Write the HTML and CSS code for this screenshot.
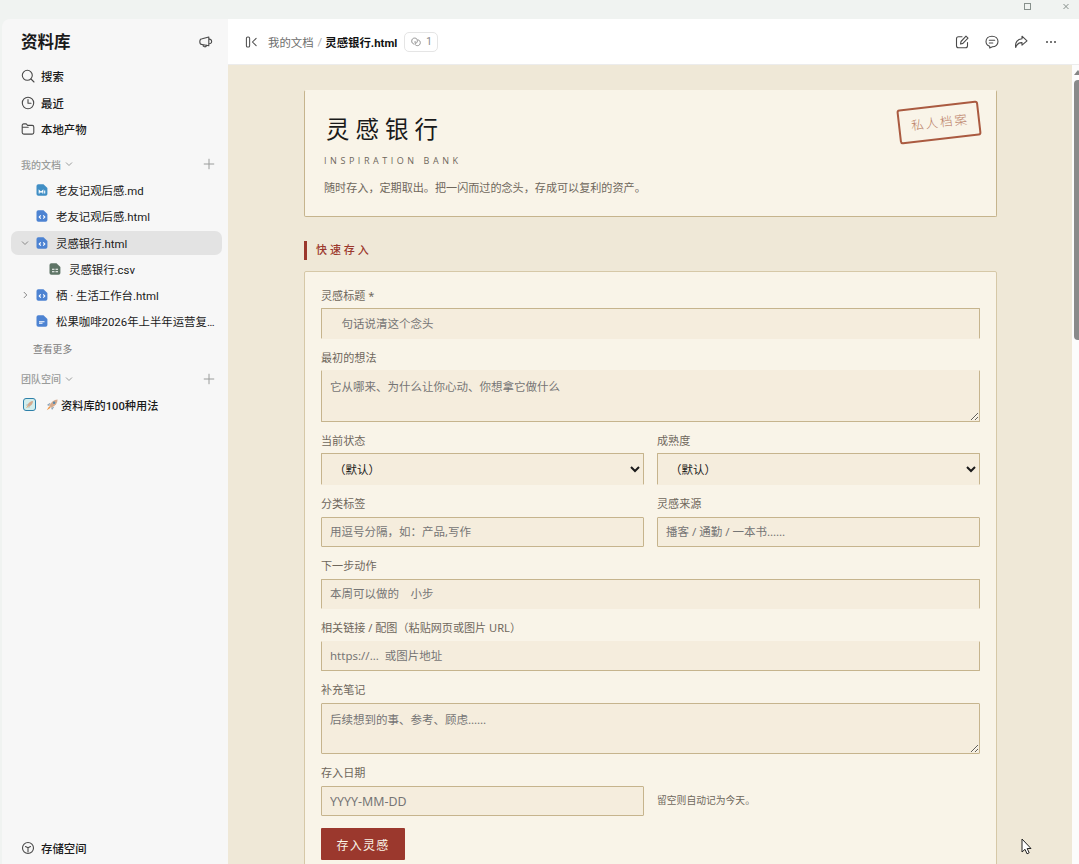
FILE: index.html
```html
<!DOCTYPE html>
<html lang="zh-CN">
<head>
    <meta charset="UTF-8">
    <meta name="viewport" content="width=device-width, initial-scale=1.0">
    <title>资料库</title>
    <link rel="stylesheet" href="styles.css">
</head>
<body>
    <svg class="sprite">
        <symbol id="chevron-down" viewBox="0 0 8 8"><path d="M1 2.5l3 3 3-3"/></symbol>
        <symbol id="plus" viewBox="0 0 12 12"><path d="M6 .8v10.4M.8 6h10.4"/></symbol>
        <symbol id="file" viewBox="0 0 12 12"><path d="M2.3.3h5.2l3.9 3.6v6a1.8 1.8 0 0 1-1.8 1.8H2.3A1.8 1.8 0 0 1 .5 9.900V2.100A1.800 1.800 0 0 1 2.300.3z"/></symbol>
    </svg>
    <div class="titlebar">
        <svg class="win-icon" viewBox="0 0 8 8"><rect x=".5" y=".5" width="6" height="6"/></svg>
        <svg class="win-icon" viewBox="0 0 8 8"><path d="M1.500 1l5 5M6.500 1l-5 5"/></svg>
    </div>
    <div class="app">
        <aside class="sidebar">
            <div class="sidebar-head">
                <h1>资料库</h1>
                <svg class="icon announce" viewBox="0 0 14 14"><path d="M3.200 3.800L9.800 2v8.800L3.200 9.500C1 9.500.8 8.500.8 6.700s.5-2.900 2.400-2.900zM9.800 4.200c3.800-.6 3.800 5 0 4.600M3.800 9.800c0 2.600 3.500 2.600 3.700.6"/></svg>
            </div>
            <nav class="nav">
                <a class="nav-item"><svg class="icon" viewBox="0 0 14 14"><circle cx="6.300" cy="6.300" r="5"/><path d="M10 10l3 3"/></svg>搜索</a>
                <a class="nav-item"><svg class="icon" viewBox="0 0 14 14"><circle cx="7" cy="7" r="5.700"/><path d="M7 3.500V7.300h3"/></svg>最近</a>
                <a class="nav-item"><svg class="icon" viewBox="0 0 14 14"><path d="M1.200 10.500v-7c0-1 .6-1.600 1.600-1.600h2.400l1.400 1.500h4.600c1 0 1.600.6 1.600 1.600v5.500c0 1-.6 1.600-1.600 1.600H2.800c-1 0-1.600-.6-1.600-1.600zM1.200 5.300h6"/></svg>本地产物</a>
            </nav>
            <div class="section-head">我的文档<svg class="chev"><use href="#chevron-down"/></svg><svg class="plus"><use href="#plus"/></svg></div>
            <ul class="tree">
                <li><span class="toggle"></span><svg class="file md" viewBox="0 0 12 12"><use href="#file"/><path class="mark" d="M3.200 9.500V6.500L5 8.300l1.800-1.800v3M8.700 6.500v3"/></svg>老友记观后感.md</li>
                <li><span class="toggle"></span><svg class="file html" viewBox="0 0 12 12"><use href="#file"/><path class="mark" d="M4.800 5.300L3.200 7l1.600 1.700M7.200 5.300L8.800 7 7.200 8.700"/></svg>老友记观后感.html</li>
                <li class="active"><svg class="toggle" viewBox="0 0 8 8"><path d="M1 2.500l3 3 3-3"/></svg><svg class="file html" viewBox="0 0 12 12"><use href="#file"/><path class="mark" d="M4.800 5.300L3.200 7l1.600 1.700M7.200 5.300L8.800 7 7.200 8.700"/></svg>灵感银行.html</li>
                <li class="child"><svg class="file csv" viewBox="0 0 12 12"><use href="#file"/><path class="mark" d="M3 6.300h2.500M6.500 6.300H9M3 8.700h2.500M6.500 8.700H9"/></svg>灵感银行.csv</li>
                <li><svg class="toggle" viewBox="0 0 8 8"><path d="M2.800 1l3 3-3 3"/></svg><svg class="file html" viewBox="0 0 12 12"><use href="#file"/><path class="mark" d="M4.800 5.300L3.200 7l1.600 1.700M7.200 5.300L8.800 7 7.200 8.700"/></svg>栖 · 生活工作台.html</li>
                <li><span class="toggle"></span><svg class="file html" viewBox="0 0 12 12"><use href="#file"/><path class="mark" d="M3 6.800h5.500M3 8.300h3.500"/></svg><span class="ellipsis">松果咖啡2026年上半年运营复盘</span></li>
            </ul>
            <a class="more">查看更多</a>
            <div class="section-head team">团队空间<svg class="chev"><use href="#chevron-down"/></svg><svg class="plus"><use href="#plus"/></svg></div>
            <div class="space">
                <span class="space-icon"><svg class="rocket" viewBox="0 0 14 14"><path class="fin" d="M4 6L1.500 8l2 .7zM8 10l-2 2.500-.700-2z"/><path class="hull" d="M3.500 8.500C5.500 4 8.500 1.500 12.500 1.500c0 4-2.500 7-7 9z"/><path class="flame" d="M4 9.500L1.500 12.500l3.300-1.700z"/></svg></span>
                <svg class="rocket big" viewBox="0 0 14 14"><path class="fin" d="M4.500 5L1 7.500l2.500 1zM9 9.500L6.500 13l-1-2.500z"/><path class="hull" d="M3.500 8.500C5.500 4 8.500 1.500 12.500 1.500c0 4-2.500 7-7 9z"/><circle class="port" cx="8.700" cy="5.200" r="1.300"/><path class="flame" d="M3.500 9L.8 13.200l4.200-2.700z"/></svg>
                资料库的100种用法
            </div>
            <a class="nav-item storage"><svg class="icon" viewBox="0 0 14 14"><circle cx="7" cy="7" r="5.500"/><path d="M4.500 5.500L7 6.700l2.500-1.200M7 6.700V11"/></svg>存储空间</a>
        </aside>
        <main class="main">
            <header class="topbar">
                <svg class="icon collapse" viewBox="0 0 14 14"><rect x="1.500" y="1.500" width="3.500" height="11" rx="1.500"/><path d="M12 3L8 7l4 4"/></svg>
                <span class="crumb">我的文档</span>
                <span class="slash">/</span>
                <span class="crumb current">灵感银行.html</span>
                <span class="badge"><svg viewBox="0 0 11 11"><path d="M3.500 7.800C1.500 7.500.8 6 .8 4.500.8 2.500 2 1.200 4 1.200s3 1.200 3 3-1 2.800-2.500 2.800V4.500M7.500 3.200c1.800.2 2.700 1.500 2.700 3 0 2-1.200 3.300-3 3.300S4.500 8.800 4.500 7.800"/></svg>1</span>
                <div class="actions">
                    <svg class="icon" viewBox="0 0 14 14"><path d="M7 1.800H3.500c-1.300 0-2 .700-2 2v7c0 1.300.7 2 2 2h7c1.300 0 2-.7 2-2V7.500M5.500 9l.5-2.500L11 1.200l2 1.900-5.100 5.300z"/></svg>
                    <svg class="icon" viewBox="0 0 14 14"><path d="M7 1.200c3.500 0 6 2.300 6 5.300s-2.500 5.300-5.500 5.300L4.700 13v-1.700C2.300 10.500 1 8.800 1 6.500c0-3 2.500-5.300 6-5.300zM4.300 5.300h5.400M4.300 8h3.500"/></svg>
                    <svg class="icon" viewBox="0 0 14 14"><path d="M8 1.200l5 4.600-5 4.400V7.600C4.800 7.400 3 8.800 1.700 12.500c-.9-5 1.800-8.400 6.300-8.700z"/></svg>
                    <svg class="icon dots" viewBox="0 0 14 14"><circle cx="3" cy="7" r="1"/><circle cx="7" cy="7" r="1"/><circle cx="11" cy="7" r="1"/></svg>
                </div>
            </header>
            <div class="viewport">
                <div class="page">
                    <section class="hero">
                        <h2>灵感银行</h2>
                        <p class="subtitle">INSPIRATION BANK</p>
                        <p class="intro">随时存入，定期取出。把一闪而过的念头，存成可以复利的资产。</p>
                        <span class="stamp">私人档案</span>
                    </section>
                    <h3>快速存入</h3>
                    <form class="deposit">
                        <div class="form-group wide">
                            <label for="title">灵感标题 *</label>
                            <input type="text" id="title" class="open-bottom" placeholder="　句话说清这个念头">
                        </div>
                        <div class="form-group wide">
                            <label for="idea">最初的想法</label>
                            <textarea id="idea" class="open-top" placeholder="它从哪来、为什么让你心动、你想拿它做什么"></textarea>
                        </div>
                        <div class="form-group">
                            <label for="status">当前状态</label>
                            <select id="status" class="open-bottom"><option>（默认）</option></select>
                        </div>
                        <div class="form-group">
                            <label for="maturity">成熟度</label>
                            <select id="maturity" class="open-bottom"><option>（默认）</option></select>
                        </div>
                        <div class="form-group">
                            <label for="tags">分类标签</label>
                            <input type="text" id="tags" placeholder="用逗号分隔，如：产品,写作">
                        </div>
                        <div class="form-group">
                            <label for="source">灵感来源</label>
                            <input type="text" id="source" placeholder="播客 / 通勤 / 一本书……">
                        </div>
                        <div class="form-group wide">
                            <label for="next">下一步动作</label>
                            <input type="text" id="next" class="open-bottom" placeholder="本周可以做的　小步">
                        </div>
                        <div class="form-group wide">
                            <label for="link">相关链接 / 配图（粘贴网页或图片 URL）</label>
                            <input type="text" id="link" class="open-top" placeholder="https://...  或图片地址">
                        </div>
                        <div class="form-group wide">
                            <label for="notes">补充笔记</label>
                            <textarea id="notes" placeholder="后续想到的事、参考、顾虑……"></textarea>
                        </div>
                        <div class="form-group">
                            <label for="date">存入日期</label>
                            <input type="text" id="date" class="date" placeholder="YYYY-MM-DD">
                        </div>
                        <p class="hint">留空则自动记为今天。</p>
                        <button type="button">存入灵感</button>
                    </form>
                </div>
                <div class="scrollbar"><span class="arrow-up"></span><span class="thumb"></span></div>
            </div>
        </main>
    </div>
    <svg class="cursor" viewBox="0 0 11 17"><path d="M1 1v13l3-2.700 2 4.500 2.200-1-2-4.300H10z"/></svg>
</body>
</html>
```
FILE: styles.css
```css
* {
    box-sizing: border-box;
}
body {
    margin: 0;
    height: 864px;
    overflow: hidden;
    display: flex;
    flex-direction: column;
    background: #f0f3f1;
    color: #1a1a1a;
    font-family: Roboto, "Noto Sans CJK SC", sans-serif;
    font-size: 11.4px;
}
h1, h2, h3, p, ul {
    margin: 0;
    padding: 0;
}
svg {
    fill: none;
    stroke: currentColor;
    flex-shrink: 0;
}
.sprite {
    display: none;
}
.titlebar {
    height: 19px;
    flex-shrink: 0;
    display: flex;
    justify-content: flex-end;
    gap: 30px;
    padding: 3px 9px 0 0;
    color: #87908c;
}
.win-icon {
    width: 8px;
    height: 8px;
}
.app {
    flex: 1;
    min-height: 0;
    display: flex;
}
.icon {
    width: 14px;
    height: 14px;
    color: #4a4a4a;
    stroke-width: 1.1;
    stroke-linejoin: round;
    stroke-linecap: round;
}

/* sidebar */
.sidebar {
    width: 226px;
    margin-left: 2px;
    background: #f7f7f7;
    border-top-left-radius: 8px;
    display: flex;
    flex-direction: column;
    flex-shrink: 0;
}
.sidebar-head {
    display: flex;
    align-items: center;
    justify-content: space-between;
    height: 46px;
    padding: 0 15px 0 19px;
}
.sidebar-head h1 {
    padding-top: 2px;
    font-size: 16.5px;
    line-height: 24px;
    font-weight: 700;
}
.nav-item {
    display: flex;
    align-items: center;
    gap: 6px;
    height: 26.4px;
    padding-left: 19px;
    font-weight: 500;
}
.nav {
    margin-top: -2px;
}
.section-head {
    display: flex;
    align-items: center;
    height: 20px;
    margin-top: 12.3px;
    padding: 0 13px 0 19px;
    font-size: 10px;
    font-weight: 500;
    color: #9a9c9b;
}
.section-head.team {
    margin-top: 7px;
}
.chev {
    width: 8px;
    height: 8px;
    margin-left: 4px;
}
.plus {
    width: 12px;
    height: 12px;
    margin-left: auto;
}
.tree {
    list-style: none;
    margin-top: 3.5px;
}
.tree li {
    display: flex;
    align-items: center;
    height: 24px;
    margin: 0 6px 2.3px 9px;
    padding-left: 10px;
    border-radius: 7px;
    white-space: nowrap;
}
.tree li.active {
    background: #e3e3e3;
}
.tree li.child {
    padding-left: 38px;
}
.toggle {
    width: 8px;
    height: 8px;
    margin-right: 7px;
    color: #888;
}
.file {
    width: 12px;
    height: 12px;
    margin-right: 8px;
    stroke: none;
}
.file .mark {
    fill: none;
    stroke: #fff;
    stroke-width: 1.1;
}
.file.md {
    fill: #418fc5;
}
.file.html {
    fill: #4d83d2;
}
.file.csv {
    fill: #5e7466;
}
.ellipsis {
    overflow: hidden;
    text-overflow: ellipsis;
    width: 161px;
}
.more {
    height: 24px;
    margin-top: 2px;
    line-height: 24px;
    padding-left: 31px;
    font-size: 9.8px;
    color: #7b7b7b;
}
.space {
    display: flex;
    align-items: center;
    height: 26px;
    margin-top: 3px;
    padding-left: 21px;
    font-weight: 500;
    font-size: 11.2px;
}
.space-icon {
    width: 13px;
    height: 13px;
    margin-right: 10px;
    display: flex;
    align-items: center;
    justify-content: center;
    border: 1px solid #2d80a9;
    border-radius: 3px;
    background: #d3eeec;
}
.rocket {
    width: 9px;
    height: 9px;
    stroke: none;
}
.rocket.big {
    width: 13px;
    height: 13px;
    margin-right: 2px;
}
.hull {
    fill: #d5a98c;
}
.fin {
    fill: #8ba2b5;
}
.flame {
    fill: #ef9440;
}
.port {
    fill: #5588ad;
}
.storage {
    margin-top: auto;
    margin-bottom: 2.6px;
}

/* main */
.main {
    flex: 1;
    min-width: 0;
    display: flex;
    flex-direction: column;
    background: #fff;
}
.topbar {
    height: 46px;
    flex-shrink: 0;
    display: flex;
    align-items: center;
    padding: 0 21px 0 17px;
    border-bottom: 1px solid #ececec;
    font-size: 11.4px;
}
.collapse {
    width: 13px;
    margin-right: 10px;
}
.crumb {
    color: #6e6e6e;
}
.crumb.current {
    color: #111;
    font-weight: 700;
}
.slash {
    margin: 0 3px 0 4px;
    color: #aaa;
}
.badge {
    display: flex;
    align-items: center;
    gap: 5px;
    height: 20px;
    width: 34px;
    margin-left: 7px;
    padding: 0 6px;
    border: 1px solid #e5e5e5;
    border-radius: 5px;
    color: #888;
    font-size: 10px;
}
.badge svg {
    width: 10px;
    height: 10px;
}
.actions {
    margin-left: auto;
    display: flex;
    gap: 15.7px;
}
.dots {
    fill: currentColor;
    stroke: none;
}
.viewport {
    flex: 1;
    min-height: 0;
    display: flex;
    overflow: hidden;
}
.page {
    flex: 1;
    padding: 25px 75px 0 76px;
    background: #efe8d7;
}
.scrollbar {
    width: 7px;
    background: #fcfcfc;
    padding: 5px 0 0 2px;
    overflow: hidden;
}
.arrow-up {
    display: block;
    width: 8px;
    border: 4px solid transparent;
    border-top: 0;
    border-bottom: 5px solid #858585;
}
.thumb {
    display: block;
    width: 8px;
    height: 260px;
    margin-top: 5px;
    border-radius: 4px;
    background: #8a8a8a;
}

/* document */
.hero {
    position: relative;
    height: 127px;
    padding: 22px 19px 0;
    background: #f9f4e8;
    border: 1px solid #c6b48d;
    border-top-color: #f9f4e8;
    border-radius: 2px;
}
.hero h2 {
    margin-left: 2px;
    font-size: 23.5px;
    line-height: 34px;
    font-weight: 400;
    letter-spacing: 6px;
}
.subtitle {
    margin-top: 7px;
    font-family: "Open Sans", sans-serif;
    font-size: 9px;
    line-height: 14px;
    letter-spacing: 3.55px;
    color: #6f675c;
}
.intro {
    margin-top: 12px;
    font-size: 11.1px;
    line-height: 18px;
    color: #6f675c;
}
.stamp {
    position: absolute;
    top: 14px;
    right: 16.5px;
    width: 82px;
    height: 35px;
    border: 2px solid #aa5a40;
    border-radius: 3px;
    transform: rotate(-6.5deg);
    color: #b87a62;
    font-size: 12.5px;
    line-height: 31px;
    letter-spacing: 2px;
    padding-left: 11px;
    font-weight: 300;
}
h3 {
    height: 19px;
    margin: 24px 0 11px;
    padding-left: 9px;
    border-left: 3px solid #9b382d;
    color: #9b382d;
    font-size: 11px;
    line-height: 20px;
    font-weight: 500;
    letter-spacing: 2.9px;
}
.deposit {
    display: grid;
    grid-template-columns: 1fr 1fr;
    gap: 12px 13px;
    padding: 16.500px 16px;
    height: 700px;
    align-content: start;
    background: #f9f4e8;
    border: 1px solid #d6c8a7;
    border-radius: 2px;
}
.wide {
    grid-column: 1 / -1;
}
label {
    display: block;
    height: 13px;
    line-height: 13px;
    margin-bottom: 6.5px;
    font-family: "Noto Sans", "Noto Sans CJK SC", sans-serif;
    font-size: 11.1px;
    color: #6f675c;
    white-space: nowrap;
}
input, textarea, select {
    display: block;
    width: 100%;
    height: 30.5px;
    padding: 0 8px;
    border: 1px solid #c6b48d;
    border-radius: 1px;
    background: #f5eddd;
    color: #1a1a1a;
    font-family: "Noto Sans", "Noto Sans CJK SC", sans-serif;
    font-size: 11.5px;
}
.date {
    font-size: 12.4px;
}
textarea {
    height: 51.7px;
    padding-top: 7px;
    line-height: 17px;
}
select {
    height: 32px;
    padding-left: 8px;
    padding-right: 0;
}
#status, #maturity {
    padding-left: 4px;
    text-indent: 4px;
}
::placeholder {
    color: #757575;
}
.open-top {
    border-top-color: #f5eddd;
}
.open-bottom {
    border-bottom-color: #f5eddd;
}
.hint {
    align-self: center;
    padding-top: 17px;
    font-size: 9.8px;
    color: #6f675c;
}
button {
    justify-self: start;
    width: 84px;
    height: 32px;
    padding: 0;
    border: none;
    border-radius: 1px;
    background: #9b382d;
    color: #f9f4e8;
    font-family: inherit;
    font-size: 12px;
    letter-spacing: 1.300px;
}
.cursor {
    position: absolute;
    left: 1021px;
    top: 838px;
    width: 11px;
    height: 17px;
    fill: #fff;
    stroke: #222;
}
```
